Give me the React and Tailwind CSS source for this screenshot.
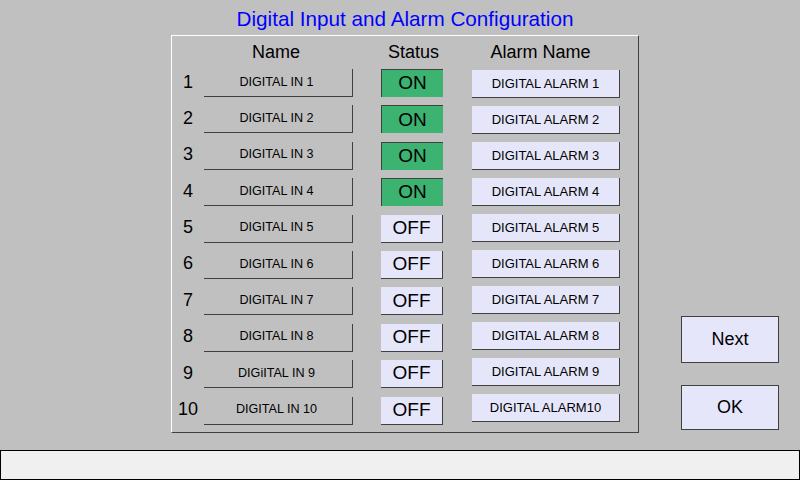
import React from "react";

const rows = [
  { n: "1", name: "DIGITAL IN 1", on: true, alarm: "DIGITAL ALARM 1" },
  { n: "2", name: "DIGITAL IN 2", on: true, alarm: "DIGITAL ALARM 2" },
  { n: "3", name: "DIGITAL IN 3", on: true, alarm: "DIGITAL ALARM 3" },
  { n: "4", name: "DIGITAL IN 4", on: true, alarm: "DIGITAL ALARM 4" },
  { n: "5", name: "DIGITAL IN 5", on: false, alarm: "DIGITAL ALARM 5" },
  { n: "6", name: "DIGITAL IN 6", on: false, alarm: "DIGITAL ALARM 6" },
  { n: "7", name: "DIGITAL IN 7", on: false, alarm: "DIGITAL ALARM 7" },
  { n: "8", name: "DIGITAL IN 8", on: false, alarm: "DIGITAL ALARM 8" },
  { n: "9", name: "DIGiITAL IN 9", on: false, alarm: "DIGITAL ALARM 9" },
  { n: "10", name: "DIGITAL IN 10", on: false, alarm: "DIGITAL ALARM10" },
];

export default function App() {
  return (
    <div
      className="w-[800px] h-[480px] bg-[#c0c0c0] text-black flex flex-col overflow-hidden"
      style={{ fontFamily: '"Liberation Sans", Arial, sans-serif' }}
    >
      <div className="h-[35px] w-[468px] ml-[171px] pt-[7px] text-center text-[20.7px] leading-[24px] text-[#0000ff]">
        Digital Input and Alarm Configuration
      </div>
      <div className="flex">
        <div className="ml-[171px] w-[468px] h-[398px] border-t border-l border-t-white border-l-white border-r border-b border-r-[#404040] border-b-[#404040] flex flex-col">
          <div className="flex pt-[6px] h-[27px] text-[18px] leading-[21px]">
            <div className="w-[32px]" />
            <div className="w-[144px] text-center">Name</div>
            <div className="ml-[33px] w-[65px] text-center">Status</div>
            <div className="ml-[26px] w-[137px] text-center">Alarm Name</div>
          </div>
          <div className="flex mt-[6px]">
            <div className="w-[32px] flex flex-col gap-[8.4px]">
              {rows.map((r) => (
                <div key={r.n} className="h-[28px] flex items-center justify-center text-[18px] pb-[2px]">
                  {r.n}
                </div>
              ))}
            </div>
            <div className="w-[149px] flex flex-col gap-[8.4px]">
              {rows.map((r) => (
                <div
                  key={r.n}
                  className="h-[28px] border-r border-b border-[#404040] flex items-center justify-center text-[12.6px] pb-[1px] pr-[3px]"
                >
                  {r.name}
                </div>
              ))}
            </div>
            <div className="ml-[28px] w-[62px] flex flex-col gap-[8.4px]">
              {rows.map((r) =>
                r.on ? (
                  <div
                    key={r.n}
                    className="h-[28px] bg-[#3cb371] border-t border-l border-[#404040] flex items-center justify-center text-[19px]"
                  >
                    ON
                  </div>
                ) : (
                  <div
                    key={r.n}
                    className="h-[28px] bg-[#e6e6fa] border-r border-b border-[#404040] flex items-center justify-center text-[19px]"
                  >
                    OFF
                  </div>
                )
              )}
            </div>
            <div className="ml-[29px] mt-[1px] w-[148px] flex flex-col gap-[8px]">
              {rows.map((r) => (
                <div
                  key={r.n}
                  className="h-[28px] bg-[#e6e6fa] border-r border-b border-[#404040] flex items-center justify-center text-[13px]"
                >
                  {r.alarm}
                </div>
              ))}
            </div>
          </div>
        </div>
        <div className="ml-[42px] w-[98px] pt-[281px] flex flex-col gap-[22px]">
          <div className="h-[47px] bg-[#e6e6fa] border border-[#404040] flex items-center justify-center text-[18px]">
            Next
          </div>
          <div className="h-[45px] bg-[#e6e6fa] border border-[#404040] flex items-center justify-center text-[18px]">
            OK
          </div>
        </div>
      </div>
      <div className="mt-[17px] h-[30px] bg-[#f0f0f0] border border-black" />
    </div>
  );
}
